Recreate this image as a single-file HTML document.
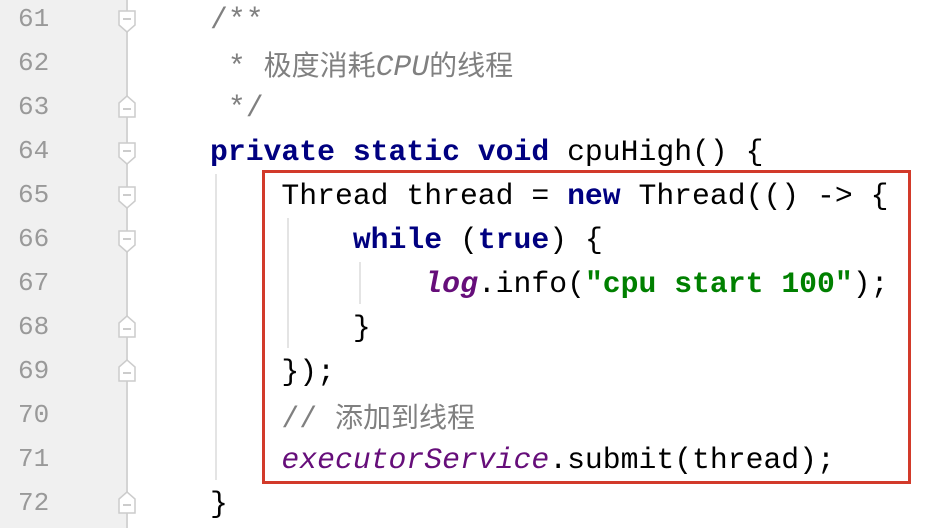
<!DOCTYPE html><html><head><style>
body{margin:0;width:950px;height:528px;background:#fff;position:relative;overflow:hidden}
#g{position:absolute;left:0;top:0;width:126px;height:528px;background:#f0f0f0;border-right:2px solid #d4d4d4}
.n{position:absolute;left:18px;font:26px "Liberation Mono",monospace;color:#999;height:44px;line-height:44px}
.l{position:absolute;left:210px;font:29.75px "Liberation Mono","Noto Sans CJK SC",monospace;white-space:pre;height:44px;line-height:44px;color:#000}
.k{color:#000080;font-weight:bold}.s{color:#008000;font-weight:bold}.c{color:#808080}
.p{color:#660e7a;font-style:italic}.cn{font-family:"Noto Sans CJK SC",sans-serif;font-size:28px}
.f{position:absolute;left:118px}
.gd{position:absolute;width:2px;background:#e4e4e4}
#box{position:absolute;left:262px;top:170px;width:643px;height:308px;border:3px solid #d23a2a}
</style></head><body>
<div id="g"></div>
<div class="n" style="top:-3px">61</div><div class="n" style="top:41px">62</div><div class="n" style="top:85px">63</div><div class="n" style="top:129px">64</div><div class="n" style="top:173px">65</div><div class="n" style="top:217px">66</div><div class="n" style="top:261px">67</div><div class="n" style="top:305px">68</div><div class="n" style="top:349px">69</div><div class="n" style="top:393px">70</div><div class="n" style="top:437px">71</div><div class="n" style="top:481px">72</div>
<svg class="f" style="top:10px" width="18" height="24"><path d="M1 1H17V15L9 22L1 15Z" fill="#fff" stroke="#ccc" stroke-width="1.5"/><path d="M5 9H13" stroke="#bbb" stroke-width="1.5"/></svg>
<svg class="f" style="top:94px" width="18" height="24"><path d="M1 23H17V9L9 2L1 9Z" fill="#fff" stroke="#ccc" stroke-width="1.5"/><path d="M5 15H13" stroke="#bbb" stroke-width="1.5"/></svg>
<svg class="f" style="top:142px" width="18" height="24"><path d="M1 1H17V15L9 22L1 15Z" fill="#fff" stroke="#ccc" stroke-width="1.5"/><path d="M5 9H13" stroke="#bbb" stroke-width="1.5"/></svg>
<svg class="f" style="top:186px" width="18" height="24"><path d="M1 1H17V15L9 22L1 15Z" fill="#fff" stroke="#ccc" stroke-width="1.5"/><path d="M5 9H13" stroke="#bbb" stroke-width="1.5"/></svg>
<svg class="f" style="top:230px" width="18" height="24"><path d="M1 1H17V15L9 22L1 15Z" fill="#fff" stroke="#ccc" stroke-width="1.5"/><path d="M5 9H13" stroke="#bbb" stroke-width="1.5"/></svg>
<svg class="f" style="top:314px" width="18" height="24"><path d="M1 23H17V9L9 2L1 9Z" fill="#fff" stroke="#ccc" stroke-width="1.5"/><path d="M5 15H13" stroke="#bbb" stroke-width="1.5"/></svg>
<svg class="f" style="top:358px" width="18" height="24"><path d="M1 23H17V9L9 2L1 9Z" fill="#fff" stroke="#ccc" stroke-width="1.5"/><path d="M5 15H13" stroke="#bbb" stroke-width="1.5"/></svg>
<svg class="f" style="top:490px" width="18" height="24"><path d="M1 23H17V9L9 2L1 9Z" fill="#fff" stroke="#ccc" stroke-width="1.5"/><path d="M5 15H13" stroke="#bbb" stroke-width="1.5"/></svg>
<div class="gd" style="left:215px;top:174px;height:306px"></div>
<div class="gd" style="left:287px;top:218px;height:130px"></div>
<div class="gd" style="left:359px;top:262px;height:42px"></div>
<div id="box"></div>
<div class="l c" style="top:-2px">/**</div>
<div class="l c" style="top:42px"> * <span class="cn">极度消耗</span><i>CPU</i><span class="cn">的线程</span></div>
<div class="l c" style="top:86px"> */</div>
<div class="l" style="top:130px"><span class="k">private static void</span> cpuHigh() {</div>
<div class="l" style="top:174px">    Thread thread = <span class="k">new</span> Thread(() -&gt; {</div>
<div class="l" style="top:218px">        <span class="k">while</span> (<span class="k">true</span>) {</div>
<div class="l" style="top:262px">            <span class="p" style="font-weight:bold">log</span>.info(<span class="s">"cpu start 100"</span>);</div>
<div class="l" style="top:306px">        }</div>
<div class="l" style="top:350px">    });</div>
<div class="l c" style="top:394px">    // <span class="cn">添加到线程</span></div>
<div class="l" style="top:438px">    <span class="p">executorService</span>.submit(thread);</div>
<div class="l" style="top:482px">}</div>
</body></html>
